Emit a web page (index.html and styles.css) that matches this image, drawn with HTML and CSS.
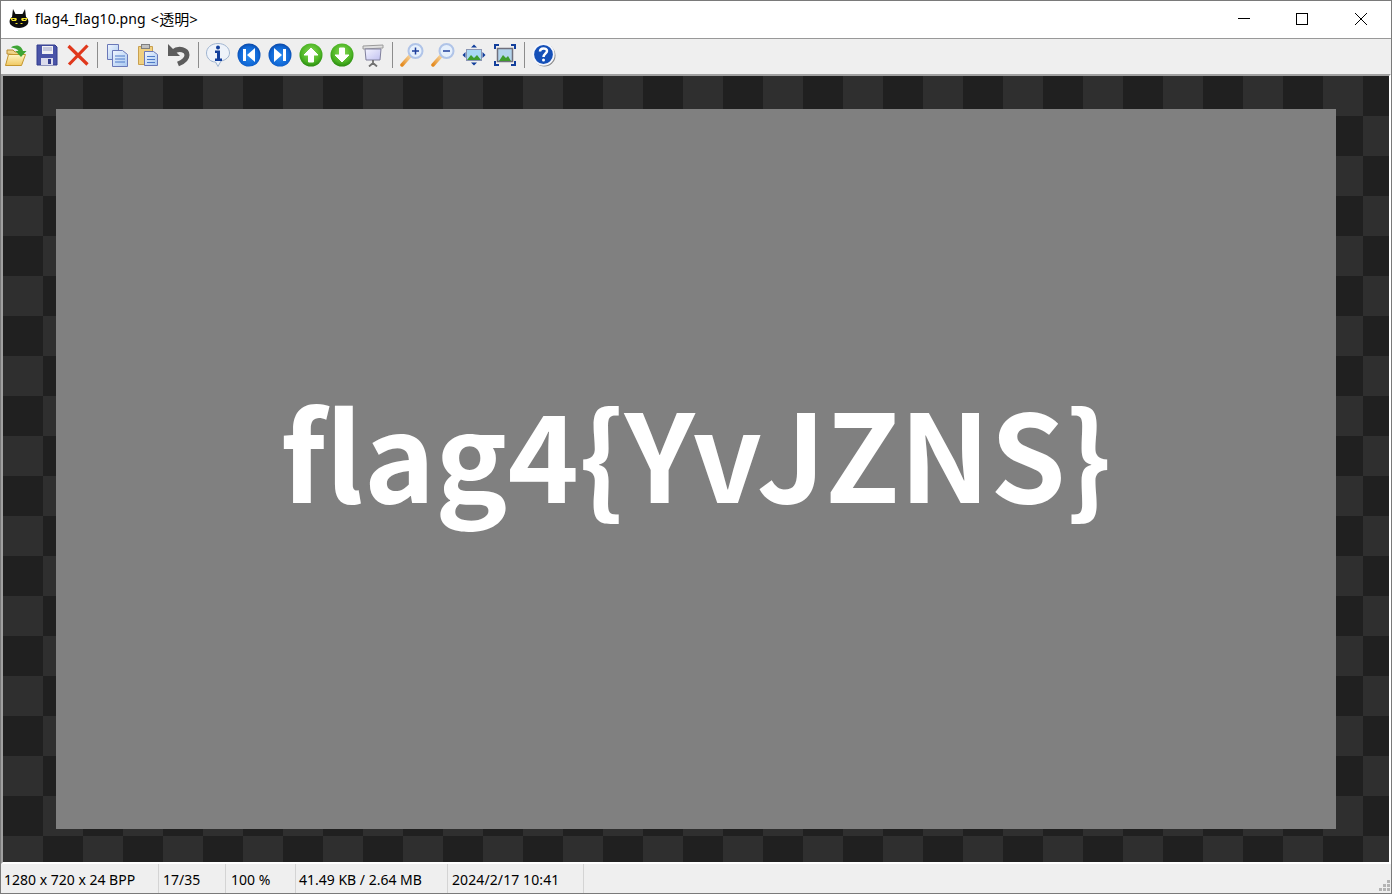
FILE: index.html
```html
<!DOCTYPE html>
<html lang="en">
<head>
  <meta charset="UTF-8">
  <title>flag4_flag10.png</title>
  <link rel="stylesheet" href="styles.css">
</head>
<body>
  <svg class="defs" width="0" height="0">
    <defs>
      <radialGradient id="blueBall" cx="0.5" cy="0.55" r="0.55">
        <stop offset="0" stop-color="#2a8cf0"/><stop offset="0.75" stop-color="#0f66d4"/><stop offset="1" stop-color="#0a47a6"/>
      </radialGradient>
      <radialGradient id="greenBall" cx="0.5" cy="0.4" r="0.6">
        <stop offset="0" stop-color="#8cdc58"/><stop offset="0.7" stop-color="#4cb424"/><stop offset="1" stop-color="#2a8c10"/>
      </radialGradient>
      <linearGradient id="folder" x1="0" y1="0" x2="0" y2="1">
        <stop offset="0" stop-color="#fff6c8"/><stop offset="1" stop-color="#f0c860"/>
      </linearGradient>
      <linearGradient id="sheet" x1="0" y1="0" x2="1" y2="1">
        <stop offset="0" stop-color="#f0f6ff"/><stop offset="1" stop-color="#a8c8f0"/>
      </linearGradient>
      <linearGradient id="board" x1="0" y1="0" x2="1" y2="1">
        <stop offset="0" stop-color="#f4f4ff"/><stop offset="1" stop-color="#c0c0f0"/>
      </linearGradient>
      <linearGradient id="handle" x1="1" y1="0" x2="0" y2="1">
        <stop offset="0" stop-color="#f6d29a"/><stop offset="1" stop-color="#e48a1e"/>
      </linearGradient>
    </defs>
  </svg>

  <div class="window">
    <header class="titlebar">
      <svg class="app-icon" width="20" height="20" viewBox="0 0 20 20">
        <path d="M4 0l2.500 5h7L16 0l1 8c3 2 3 6 1 8-2 2-5 3-8 3s-6-1-8-3c-2-2-2-6 1-8z" fill="#0c0c0c"/>
        <path d="M1 9h6l1 1-1 2H3zM13 12l-1-2 1-1h6l-2 3z" fill="#f2e22a"/>
        <path d="M3.500 10h2v1h-2zM14.500 10h2v1h-2z" fill="#0c0c0c"/>
        <rect x="6.500" y="14" width="2" height="1" fill="#f2e22a"/>
        <rect x="11.500" y="14" width="2" height="1" fill="#f2e22a"/>
      </svg>
      <span class="title-text">flag4_flag10.png</span>
      <span class="title-mode">&lt;透明&gt;</span>
      <div class="win-controls">
        <button class="win-btn"><svg width="14" height="14" viewBox="0 0 14 14"><path d="M1 6.500h12" stroke="#000" fill="none"/></svg></button>
        <button class="win-btn"><svg width="14" height="14" viewBox="0 0 14 14"><rect x="1.500" y="1.500" width="11" height="11" stroke="#000" fill="none"/></svg></button>
        <button class="win-btn win-close"><svg width="14" height="14" viewBox="0 0 14 14"><path d="M1 1l12 12M13 1L1 13" stroke="#000" fill="none"/></svg></button>
      </div>
    </header>

    <nav class="toolbar">
      <!-- open -->
      <span class="tool tool-first"><svg width="24" height="24" viewBox="0 0 24 24">
        <path d="M3 11V7h6l2 2h5v3z" fill="#f0d48a" stroke="#b98a2e"/>
        <path d="M1.500 22.500l3-11h17l-4 11z" fill="url(#folder)" stroke="#c4962e"/>
        <path d="M7 4.500c4-3 10-3 12 3.500h3.500l-5.500 6-5.500-6h3c-1-2-4-3-7.500-3.500z" fill="#3fa535"/>
      </svg></span>
      <!-- save -->
      <span class="tool"><svg width="24" height="24" viewBox="0 0 24 24">
        <path d="M2 2h18l2 2v18H2z" fill="#4a54a8" stroke="#333c8c"/>
        <rect x="7" y="3" width="11" height="8" fill="#f2f2f4"/>
        <path d="M8 5h9M8 7h9" stroke="#9aa0c8"/>
        <rect x="6" y="15" width="12" height="7" fill="#dcdcec"/>
        <rect x="13" y="16" width="3" height="5" fill="#333c8c"/>
      </svg></span>
      <!-- delete -->
      <span class="tool"><svg width="24" height="24" viewBox="0 0 24 24">
        <path d="M2.500 3L21.500 21.500M21.500 2.500L3 21.500" stroke="#e0381c" stroke-width="3.200" fill="none"/>
      </svg></span>
      <span class="sep"></span>
      <!-- copy -->
      <span class="tool"><svg width="24" height="24" viewBox="0 0 24 24">
        <path d="M2.500 1.500h11v15h-11z" fill="url(#sheet)" stroke="#6a78b8"/>
        <path d="M7.500 7.500h10l5 4v12h-15z" fill="url(#sheet)" stroke="#6a78b8"/>
        <path d="M10 13h10M10 16h10M10 19h10" stroke="#4f7ac8"/>
      </svg></span>
      <!-- paste -->
      <span class="tool"><svg width="24" height="24" viewBox="0 0 24 24">
        <path d="M2.500 3.500h14v18h-14z" fill="#f0d080" stroke="#c8a050"/>
        <rect x="5.500" y="1.500" width="8" height="4" fill="#c0c0c0" stroke="#7f7f7f"/>
        <path d="M8.500 8.500h9l4 3v11h-13z" fill="url(#sheet)" stroke="#6a78b8"/>
        <path d="M11 13.500h8M11 16.500h8M11 19.500h8" stroke="#4f7ac8"/>
      </svg></span>
      <!-- undo -->
      <span class="tool"><svg width="24" height="24" viewBox="0 0 24 24">
        <path d="M1 1v12h12z" fill="#5c5c5c"/>
        <path d="M6 9C12 4 20 7 20 12c0 4-4 7-9 9" stroke="#5c5c5c" stroke-width="5" fill="none"/>
      </svg></span>
      <span class="sep"></span>
      <!-- info -->
      <span class="tool"><svg width="24" height="24" viewBox="0 0 24 24">
        <path d="M12 .5C5 .5 .5 5 .5 10s4 9 9 9l2.500 4.500 3-5.500c5-1 8.500-4 8.500-8 0-5-4.500-9.500-11.500-9.500z" fill="#eef3fa" stroke="#9fb4d0"/>
        <circle cx="12" cy="4.500" r="2" fill="#123f9c"/>
        <path d="M9 7.500h5v8h2v2.500H9v-2.500h2V10H9z" fill="#123f9c"/>
      </svg></span>
      <!-- previous -->
      <span class="tool"><svg width="24" height="24" viewBox="0 0 24 24">
        <circle cx="12" cy="12" r="11.500" fill="url(#blueBall)"/>
        <path d="M6 6h3v12H6zM18 5v14l-8-7z" fill="#fff"/>
      </svg></span>
      <!-- next -->
      <span class="tool"><svg width="24" height="24" viewBox="0 0 24 24">
        <circle cx="12" cy="12" r="11.500" fill="url(#blueBall)"/>
        <path d="M15 6h3v12h-3zM6 5v14l8-7z" fill="#fff"/>
      </svg></span>
      <!-- up -->
      <span class="tool"><svg width="24" height="24" viewBox="0 0 24 24">
        <circle cx="12" cy="12" r="11.500" fill="url(#greenBall)"/>
        <path d="M12 5l7 7h-4.500v7h-5v-7H5z" fill="#fff" stroke="#fff" stroke-linejoin="round"/>
      </svg></span>
      <!-- down -->
      <span class="tool"><svg width="24" height="24" viewBox="0 0 24 24">
        <circle cx="12" cy="12" r="11.500" fill="url(#greenBall)"/>
        <path d="M12 19l-7-7h4.500V5h5v7H19z" fill="#fff" stroke="#fff" stroke-linejoin="round"/>
      </svg></span>
      <!-- slideshow -->
      <span class="tool"><svg width="24" height="24" viewBox="0 0 24 24">
        <path d="M2 3l20-1v3L2 6z" fill="#e0e0e0" stroke="#9a9a9a"/>
        <path d="M4 6h16l-1 11H5z" fill="url(#board)" stroke="#80809c"/>
        <path d="M12 17v3M12 20l-4 3.500M12 20l4 3.500" stroke="#707070" stroke-width="1.800" fill="none"/>
      </svg></span>
      <span class="sep"></span>
      <!-- zoom in -->
      <span class="tool"><svg width="24" height="24" viewBox="0 0 24 24">
        <path d="M2 22l8-9" stroke="url(#handle)" stroke-width="3.500" stroke-linecap="round" fill="none"/>
        <circle cx="15.500" cy="8" r="7" fill="#e6f0fc" stroke="#b0c4e8" stroke-width="2"/>
        <path d="M12 8h7M15.500 4.500v7" stroke="#1f3f9c" stroke-width="1.500"/>
      </svg></span>
      <!-- zoom out -->
      <span class="tool"><svg width="24" height="24" viewBox="0 0 24 24">
        <path d="M2 22l8-9" stroke="url(#handle)" stroke-width="3.500" stroke-linecap="round" fill="none"/>
        <circle cx="15.500" cy="8" r="7" fill="#e6f0fc" stroke="#b0c4e8" stroke-width="2"/>
        <path d="M12 8h7" stroke="#1f3f9c" stroke-width="1.500"/>
      </svg></span>
      <!-- fit to window -->
      <span class="tool"><svg width="24" height="24" viewBox="0 0 24 24">
        <rect x="4.500" y="6.500" width="15" height="11" fill="#a8d8f4" stroke="#8a96b4"/>
        <path d="M5 17l4-5 3 3 3-3 4 5z" fill="#3f9c2c"/>
        <path d="M12 1.500l3 3H9zM12 22.500l-3-3h6zM.5 12l3-3v6zM23.500 12l-3 3V9z" fill="#123f9c"/>
      </svg></span>
      <!-- actual size -->
      <span class="tool"><svg width="24" height="24" viewBox="0 0 24 24">
        <rect x="4.500" y="5.500" width="15" height="13" fill="#b4d4ec" stroke="#70707c" stroke-width="1.500"/>
        <path d="M6 18l4-6 3 3 2-2 3 5z" fill="#3f9c2c"/>
        <path d="M2 6V2h4M18 2h4v4M22 18v4h-4M6 22H2v-4" stroke="#123f9c" stroke-width="2" fill="none"/>
      </svg></span>
      <span class="sep"></span>
      <!-- help -->
      <span class="tool"><svg width="24" height="24" viewBox="0 0 24 24">
        <circle cx="12.500" cy="12.500" r="11" fill="#8c8c8c"/>
        <circle cx="11.500" cy="11.500" r="10.300" fill="#1550b8" stroke="#f4f6fc" stroke-width="1.800"/>
        <path d="M8 8.500c0-4 7-4 7-.5 0 2.500-3.500 3-3.500 6" stroke="#fff" stroke-width="2.500" fill="none"/>
        <circle cx="11.500" cy="17" r="1.500" fill="#fff"/>
      </svg></span>
    </nav>

    <main class="viewport">
      <div class="picture">flag4{YvJZNS}</div>
    </main>

    <footer class="statusbar">
      <div class="cell cell-size">1280 x 720 x 24 BPP</div>
      <div class="cell cell-index">17/35</div>
      <div class="cell cell-zoom">100 %</div>
      <div class="cell cell-bytes">41.49 KB / 2.64 MB</div>
      <div class="cell cell-date">2024/2/17 10:41</div>
      <svg class="grip" width="11" height="11" viewBox="0 0 11 11">
        <path d="M8 0h3v3H8zM4 4h3v3H4zM8 4h3v3H8zM0 8h3v3H0zM4 8h3v3H4zM8 8h3v3H8z" fill="#b4b4b4"/>
      </svg>
    </footer>
  </div>
</body>
</html>
```

FILE: styles.css
```css
html, body {
  margin: 0;
  height: 100%;
}

body {
  font-family: "Noto Sans", "Noto Sans CJK SC", sans-serif;
  font-size: 14px;
  color: #000;
  overflow: hidden;
}

.defs {
  display: block;
  height: 0;
}

.window {
  height: 100vh;
  box-sizing: border-box;
  border: 1px solid #7a7a7a;
  display: flex;
  flex-direction: column;
}

/* Title bar */
.titlebar {
  height: 35px;
  flex: none;
  background: #fff;
  display: flex;
  align-items: center;
  padding-left: 8px;
  padding-bottom: 2px;
  border-bottom: 1px solid #999;
}

.app-icon {
  display: block;
  margin-right: 6px;
}

.title-text {
  font-size: 14px;
  letter-spacing: 0.06px;
}

.title-mode {
  font-size: 15px;
  margin-left: 5px;
}

.win-controls {
  margin-left: auto;
  display: flex;
  padding-right: 1px;
}

.win-btn {
  width: 58px;
  height: 34px;
  padding: 0;
  border: none;
  background: none;
  display: flex;
  align-items: center;
  justify-content: center;
}

.win-close {
  width: 59px;
}

/* Toolbar */
.toolbar {
  box-sizing: border-box;
  height: 35px;
  padding-bottom: 3px;
  flex: none;
  background: #efefef;
  display: flex;
  align-items: center;
}

.tool {
  width: 31px;
  height: 24px;
  display: flex;
  justify-content: center;
}

.tool svg {
  display: block;
}

.tool-first {
  width: 30px;
}

.sep {
  width: 8px;
  height: 26px;
  display: flex;
  justify-content: center;
}

.sep::before {
  content: "";
  width: 1px;
  background: #8c8c8c;
}

/* Image area */
.viewport {
  flex: 1;
  min-height: 0;
  border: 2px solid;
  border-color: #a0a0a0 #fff #fff #a0a0a0;
  background: conic-gradient(#2f2f2f 25%, #202020 0 50%, #2f2f2f 0 75%, #202020 0) 0 0 / 80px 80px;
  display: flex;
  align-items: center;
  justify-content: center;
}

.picture {
  width: 1280px;
  height: 720px;
  box-sizing: border-box;
  padding-bottom: 38px;
  flex: none;
  background: #808080;
  color: #fff;
  font-family: "Noto Sans CJK SC", sans-serif;
  font-weight: 700;
  font-size: 121px;
  display: flex;
  align-items: center;
  justify-content: center;
}

/* Status bar */
.statusbar {
  height: 29px;
  flex: none;
  background: #efefef;
  display: flex;
  align-items: center;
}

.cell {
  height: 100%;
  box-sizing: border-box;
  padding-left: 3px;
  padding-top: 1px;
  border-right: 1px solid #d4d4d4;
  display: flex;
  align-items: center;
  white-space: nowrap;
}

.cell-size { width: 158px; }
.cell-index { width: 67px; padding-left: 4px; }
.cell-zoom { width: 70px; padding-left: 5px; }
.cell-bytes { width: 152px; padding-left: 3px; }
.cell-date { width: 136px; padding-left: 4px; letter-spacing: 0.1px; }

.grip {
  margin-left: auto;
  align-self: flex-end;
  margin-right: 1px;
  margin-bottom: 2px;
}
```
